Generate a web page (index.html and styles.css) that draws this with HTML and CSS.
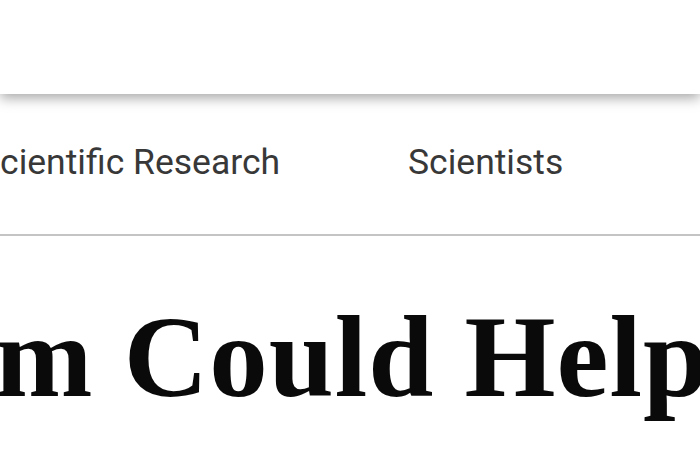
FILE: index.html
```html
<!DOCTYPE html>
<html lang="en">
  <head>
    <meta charset="UTF-8" />
    <meta name="viewport" content="width=device-width, initial-scale=1.0" />
    <title>Article</title>
    <link rel="stylesheet" href="styles.css">
  </head>
  <body>
    <header class="top-bar"></header>

    <nav class="section-nav">
      <a href="#" class="nav-link first">Scientific Research</a>
      <a href="#" class="nav-link">Scientists</a>
    </nav>

    <main class="article">
      <h1 class="headline">m Could Help</h1>
    </main>
  </body>
</html>
```

FILE: styles.css
```css
body {
  margin: 0;
  background-color: #fff;
  overflow: hidden;
}

.top-bar {
  height: 94px;
  background-color: #fff;
  box-shadow: 0 4px 12px rgba(0, 0, 0, 0.35);
  position: relative;
  z-index: 1;
}

.section-nav {
  display: flex;
  align-items: center;
  height: 136px;
  padding-bottom: 4px;
  border-bottom: 2px solid #c4c4c4;
  white-space: nowrap;
  overflow: hidden;
}

.nav-link {
  font-family: Roboto, "Liberation Sans", sans-serif;
  font-size: 35.5px;
  color: #383838;
  text-decoration: none;
}

.nav-link.first {
  margin-left: -21px;
  margin-right: 128px;
}

.article {
  overflow: hidden;
}

.headline {
  margin: 51px 0 0 -5px;
  font-family: "Liberation Serif", serif;
  font-weight: bold;
  font-size: 117px;
  line-height: 1.2;
  letter-spacing: 1px;
  color: #0a0a0a;
  white-space: nowrap;
}
```
